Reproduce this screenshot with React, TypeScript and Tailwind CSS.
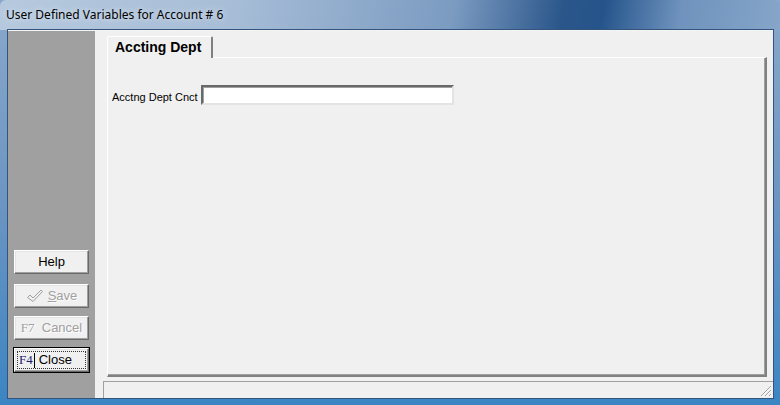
import React from "react";

function Btn({
  children,
  focused,
  className = "",
}: {
  children: React.ReactNode;
  focused?: boolean;
  className?: string;
}) {
  return (
    <div
      className={
        "w-[75px] h-[24px] bg-[#f0f0f0] border border-t-white border-l-white border-r-[#696969] border-b-[#696969] shadow-[inset_-1px_-1px_0_#a0a0a0,inset_1px_1px_0_#e3e3e3] flex items-center justify-center " +
        (focused ? "outline outline-1 outline-black " : "") +
        className
      }
    >
      {children}
    </div>
  );
}

export default function App() {
  const sans = { fontFamily: '"Liberation Sans", Arial, sans-serif' };
  return (
    <div
      className="w-[780px] h-[405px] relative overflow-hidden bg-[linear-gradient(180deg,#8aa8cb_0%,#6c95c2_50%,#3b85c3_100%)]"
      style={sans}
    >
      {/* title bar */}
      <div className="h-[30px] flex items-center pl-[6px] bg-[linear-gradient(100deg,#b6c9de_0%,#a7bdd7_30%,#7b9bc1_58%,#2a568a_72%,#25548b_77%,#6f93bd_87%,#86a5c9_100%)] rounded-t-[6px]">
        <span
          className="text-[12px] text-black"
          style={{ fontFamily: '"Noto Sans", "Open Sans", sans-serif', textShadow: "0 0 6px rgba(255,255,255,0.8)" }}
        >
          User Defined Variables for Account # 6
        </span>
      </div>

      {/* client area */}
      <div className="absolute left-[7px] top-[29px] w-[767px] h-[370px] border border-[#33547c] flex">
        {/* left gray panel */}
        <div className="w-[87px] h-full bg-[#a0a0a0] flex flex-col pl-[6px] pt-[219px] border-t border-[#f4f4f4]">
          <Btn className="text-[13px] text-black">Help</Btn>
          <Btn className="mt-[10px] text-[13px] text-[#a0a0a0]">
            <span className="flex items-center gap-[4px]">
              <svg width="18" height="16" viewBox="0 0 18 16">
                <path
                  d="M1.5 9.5 L4 7 L7 10 L15 2 L16.5 3.5 L7 13.5 Z"
                  fill="none"
                  stroke="#a0a0a0"
                  strokeWidth="1"
                />
              </svg>
              <span style={{ textShadow: "1px 1px 0 #fff" }}>
                <span className="underline">S</span>ave
              </span>
            </span>
          </Btn>
          <Btn className="mt-[8px] text-[13px] text-[#a0a0a0]">
            <span style={{ textShadow: "1px 1px 0 #fff" }}>
              <span style={{ fontFamily: '"Liberation Serif", serif' }}>F7</span>&nbsp; Cancel
            </span>
          </Btn>
          <Btn focused className="mt-[8px] text-[13px] text-black">
            <span className="border border-dotted border-[#333] w-[69px] h-[18px] flex items-center pl-[1px]">
              <span className="text-[#1c1c6c]" style={{ fontFamily: '"Liberation Serif", serif' }}>
                F4
              </span>
              <span className="w-px h-[15px] bg-black ml-[1px]" />
              <span className="ml-[4px]">Close</span>
            </span>
          </Btn>
        </div>

        {/* right content */}
        <div className="flex-1 h-full bg-[#f0f0f0] flex flex-col border-t border-[#f4f4f4]">
          <div className="pl-[12px] pt-[5px] flex">
            <div className="h-[22px] w-[106px] bg-[#f0f0f0] border-l border-t border-white border-r-2 border-r-[#808080] rounded-t-[2px] pl-[7px] flex items-center text-[14px] font-bold text-black relative z-10 -mb-px">
              Accting Dept
            </div>
          </div>
          <div className="ml-[12px] mr-[6px] h-[320px] border-l border-t border-white border-r-2 border-b-2 border-r-[#808080] border-b-[#808080] shadow-[inset_-1px_-1px_0_#a0a0a0] flex items-start pt-[27px] pl-[4px]">
            <span className="text-[11px] text-[#000000] mt-[4px]">Acctng Dept Cnct</span>
            <div className="ml-[3px] w-[253px] h-[20px] bg-white border-2 border-t-[#696969] border-l-[#696969] border-r-[#e3e3e3] border-b-[#e3e3e3] shadow-[inset_1px_1px_0_#a0a0a0]" />
          </div>
          <div className="mt-[4px] ml-[8px] flex-1 border-l border-t border-[#a0a0a0] relative">
            <svg className="absolute right-[1px] bottom-[1px]" width="12" height="12" viewBox="0 0 12 12">
              <path d="M11 1 L1 11 M11 5 L5 11 M11 9 L9 11" stroke="#a0a0a0" strokeWidth="1" />
              <path d="M11 2 L2 11 M11 6 L6 11 M11 10 L10 11" stroke="#fff" strokeWidth="1" />
            </svg>
          </div>
        </div>
      </div>
    </div>
  );
}
